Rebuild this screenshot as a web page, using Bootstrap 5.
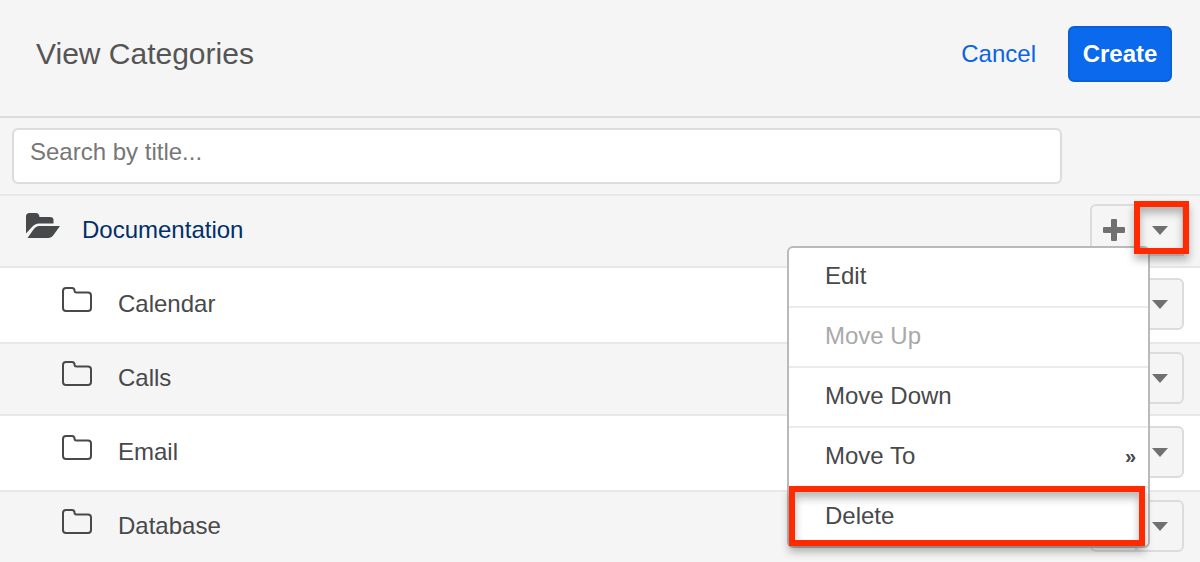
<!DOCTYPE html>
<html lang="en">
<head>
<meta charset="utf-8">
<meta name="viewport" content="width=device-width, initial-scale=1">
<title>View Categories</title>
<link href="https://cdn.jsdelivr.net/npm/bootstrap@5.3.0/dist/css/bootstrap.min.css" rel="stylesheet">
<style>
  body { font-family: "Liberation Sans", Arial, sans-serif; font-size: 24px; line-height: 30px; color: #48494a; background: #f5f5f5; }
  .page-head { padding: 26px 28px 34px 36px; border-bottom: 2px solid #dcdcdc; }
  .page-title { font-size: 30px; line-height: 40px; font-weight: 400; color: #555; }
  .btn { --bs-btn-font-size: 24px; --bs-btn-line-height: 30px; }
  .btn-cancel { color: #0b63e5; text-decoration: none; }
  .btn-create { --bs-btn-color: #fff; --bs-btn-bg: #0a69ec; --bs-btn-border-color: #0b60d6; --bs-btn-hover-color: #fff; --bs-btn-hover-bg: #0b60d6;
    --bs-btn-border-width: 2px; --bs-btn-border-radius: 6px; --bs-btn-font-weight: 700; width: 104px; height: 56px; padding: 0; }
  .search-bar { padding: 10px 138px 10px 12px; }
  .search-bar .form-control { height: 56px; padding: 4px 16px 12px; font-size: 24px; line-height: 36px; border: 2px solid #dcdcdc; border-radius: 6px; color: #48494a; }
  .search-bar .form-control::placeholder { color: #777; }
  .tree-row { height: 74px; padding: 0 16px 2px 62px; background: #fff; }
  .tree-row:nth-child(odd) { background: #f5f5f5; border-top: 2px solid #e8e8e8; border-bottom: 2px solid #e8e8e8; }
  .tree-row.tree-root { padding-left: 26px; }
  .tree-icon { width: 34px; height: 28px; margin-right: 22px; margin-bottom: 8px; }
  .tree-label { color: #48494a; text-decoration: none; }
  .tree-root .tree-label { color: #022f68; }
  .tools .btn { --bs-btn-bg: #f5f5f5; --bs-btn-border-color: #dcdcdc; --bs-btn-border-width: 2px; --bs-btn-border-radius: 6px; width: 48px; height: 52px; padding: 0; color: #707070;
    display: flex; align-items: center; justify-content: center; }
  .tools .btn:first-child { width: 47px; }
  .tools .btn.show { background: #f5f5f5; border-color: #dcdcdc; }
  .action-menu { --bs-dropdown-min-width: 363px; --bs-dropdown-padding-y: 0; --bs-dropdown-border-width: 2px; --bs-dropdown-border-color: #bababa; --bs-dropdown-border-radius: 6px;
    --bs-dropdown-font-size: 24px; --bs-dropdown-link-color: #48494a; --bs-dropdown-link-disabled-color: #a9a9a9; --bs-dropdown-item-padding-x: 36px;
    top: 42px; right: 34px; }
  .action-menu .dropdown-item { height: 60px; padding-top: 13px; padding-right: 12px; border-bottom: 2px solid #ebebeb; }
  .action-menu li:last-child .dropdown-item { height: 58px; border-bottom: 0; }
  .submenu-mark { font-size: 20px; font-weight: 700; }
  .callout { position: absolute; border: 6px solid #ff2a00; pointer-events: none; z-index: 1010;
    box-shadow: 0 6px 8px rgba(0,0,0,.28), inset 0 6px 8px rgba(0,0,0,.28); }
  .callout-toggle { inset: -3px -5px 2px 44px; }
  .callout-item { inset: -2px 3px 0 0; }
</style>
</head>
<body>
<svg class="d-none" xmlns="http://www.w3.org/2000/svg">
  <symbol id="folder" viewBox="0 0 34 28"><path d="M4 2H10Q12.500 2 12.500 4.500Q12.500 6.500 14.500 6.500H26Q29 6.500 29 9.500V22Q29 25 26 25H4Q1 25 1 22V5Q1 2 4 2Z" fill="none" stroke="currentColor" stroke-width="2"/></symbol>
  <symbol id="folder-open" viewBox="0 0 34 28"><path d="M0 21.500V4.500Q0 1 3.500 1H10Q13 1 13.500 5H24Q27.500 5 27.500 8V11.500H13Q9 11.500 6 15Z M13 14H34L27.500 23Q25.500 26 22 26H1.500L7.500 17.500Q10 14 13 14Z" fill="currentColor"/></symbol>
  <symbol id="plus" viewBox="0 0 22 22"><path d="M9 0h4q1 0 1 1v7h7q1 0 1 1v4q0 1-1 1h-7v7q0 1-1 1H9q-1 0-1-1v-7H1q-1 0-1-1V9q0-1 1-1h7V1q0-1 1-1z" fill="currentColor"/></symbol>
  <symbol id="caret" viewBox="0 0 16 9"><path d="M0 0h16L8 9z" fill="currentColor"/></symbol>
</svg>
<div class="vh-100 overflow-hidden">
  <header class="page-head d-flex align-items-center justify-content-between">
    <h1 class="page-title m-0">View Categories</h1>
    <div class="d-flex align-items-center">
      <button type="button" class="btn btn-cancel border-0 p-0 me-4">Cancel</button>
      <button type="button" class="btn btn-create ms-2">Create</button>
    </div>
  </header>
  <form class="search-bar">
    <input type="text" class="form-control shadow-none" placeholder="Search by title..." aria-label="Search by title">
  </form>
  <main>
    <div class="tree-row tree-root d-flex align-items-center">
      <svg class="tree-icon" aria-hidden="true"><use href="#folder-open"/></svg>
      <a href="#" class="tree-label me-auto">Documentation</a>
      <div class="tools btn-group dropdown">
        <button type="button" class="btn" aria-label="Add"><svg width="22" height="22"><use href="#plus"/></svg></button>
        <button type="button" class="btn show" aria-label="Actions" aria-expanded="true"><svg width="16" height="9"><use href="#caret"/></svg></button>
        <ul class="dropdown-menu action-menu show">
          <li><a class="dropdown-item" href="#">Edit</a></li>
          <li><a class="dropdown-item disabled" href="#" aria-disabled="true">Move Up</a></li>
          <li><a class="dropdown-item" href="#">Move Down</a></li>
          <li><a class="dropdown-item d-flex justify-content-between" href="#">Move To <span class="submenu-mark">»</span></a></li>
          <li class="position-relative"><a class="dropdown-item" href="#">Delete</a><span class="callout callout-item"></span></li>
        </ul>
        <span class="callout callout-toggle"></span>
      </div>
    </div>
    <div class="tree-row d-flex align-items-center">
      <svg class="tree-icon" aria-hidden="true"><use href="#folder"/></svg>
      <a href="#" class="tree-label me-auto">Calendar</a>
      <div class="tools btn-group">
        <button type="button" class="btn" aria-label="Add"><svg width="22" height="22"><use href="#plus"/></svg></button>
        <button type="button" class="btn" aria-label="Actions"><svg width="16" height="9"><use href="#caret"/></svg></button>
      </div>
    </div>
    <div class="tree-row d-flex align-items-center">
      <svg class="tree-icon" aria-hidden="true"><use href="#folder"/></svg>
      <a href="#" class="tree-label me-auto">Calls</a>
      <div class="tools btn-group">
        <button type="button" class="btn" aria-label="Add"><svg width="22" height="22"><use href="#plus"/></svg></button>
        <button type="button" class="btn" aria-label="Actions"><svg width="16" height="9"><use href="#caret"/></svg></button>
      </div>
    </div>
    <div class="tree-row d-flex align-items-center">
      <svg class="tree-icon" aria-hidden="true"><use href="#folder"/></svg>
      <a href="#" class="tree-label me-auto">Email</a>
      <div class="tools btn-group">
        <button type="button" class="btn" aria-label="Add"><svg width="22" height="22"><use href="#plus"/></svg></button>
        <button type="button" class="btn" aria-label="Actions"><svg width="16" height="9"><use href="#caret"/></svg></button>
      </div>
    </div>
    <div class="tree-row d-flex align-items-center">
      <svg class="tree-icon" aria-hidden="true"><use href="#folder"/></svg>
      <a href="#" class="tree-label me-auto">Database</a>
      <div class="tools btn-group">
        <button type="button" class="btn" aria-label="Add"><svg width="22" height="22"><use href="#plus"/></svg></button>
        <button type="button" class="btn" aria-label="Actions"><svg width="16" height="9"><use href="#caret"/></svg></button>
      </div>
    </div>
  </main>
</div>
<script src="https://cdn.jsdelivr.net/npm/bootstrap@5.3.0/dist/js/bootstrap.bundle.min.js"></script>
</body>
</html>
